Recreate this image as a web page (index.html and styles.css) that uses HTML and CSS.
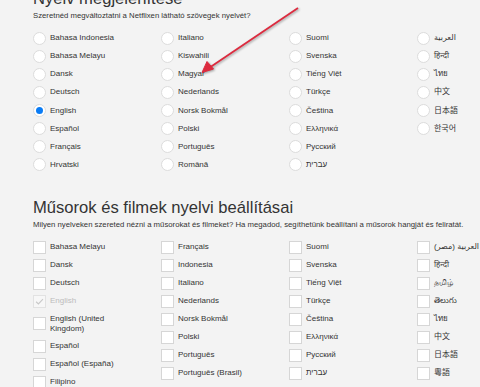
FILE: index.html
```html
<!DOCTYPE html>
<html lang="hu">
<head>
<meta charset="utf-8">
<title>Nyelv</title>
<link rel="stylesheet" href="styles.css">
</head>
<body>
<div class="page">
  <section class="sec">
    <h1 class="title">Nyelv megjelenítése</h1>
    <p class="sub">Szeretnéd megváltoztatni a Netflixen látható szövegek nyelvét?</p>
    <div class="radios">
      <div class="opt"><span class="radio"></span><span class="lbl">Bahasa Indonesia</span></div>
      <div class="opt"><span class="radio"></span><span class="lbl">Bahasa Melayu</span></div>
      <div class="opt"><span class="radio"></span><span class="lbl">Dansk</span></div>
      <div class="opt"><span class="radio"></span><span class="lbl">Deutsch</span></div>
      <div class="opt"><span class="radio on"></span><span class="lbl">English</span></div>
      <div class="opt"><span class="radio"></span><span class="lbl">Español</span></div>
      <div class="opt"><span class="radio"></span><span class="lbl">Français</span></div>
      <div class="opt"><span class="radio"></span><span class="lbl">Hrvatski</span></div>
      <div class="opt"><span class="radio"></span><span class="lbl">Italiano</span></div>
      <div class="opt"><span class="radio"></span><span class="lbl">Kiswahili</span></div>
      <div class="opt"><span class="radio"></span><span class="lbl">Magyar</span></div>
      <div class="opt"><span class="radio"></span><span class="lbl">Nederlands</span></div>
      <div class="opt"><span class="radio"></span><span class="lbl">Norsk Bokmål</span></div>
      <div class="opt"><span class="radio"></span><span class="lbl">Polski</span></div>
      <div class="opt"><span class="radio"></span><span class="lbl">Português</span></div>
      <div class="opt"><span class="radio"></span><span class="lbl">Română</span></div>
      <div class="opt"><span class="radio"></span><span class="lbl">Suomi</span></div>
      <div class="opt"><span class="radio"></span><span class="lbl">Svenska</span></div>
      <div class="opt"><span class="radio"></span><span class="lbl">Tiếng Việt</span></div>
      <div class="opt"><span class="radio"></span><span class="lbl">Türkçe</span></div>
      <div class="opt"><span class="radio"></span><span class="lbl">Čeština</span></div>
      <div class="opt"><span class="radio"></span><span class="lbl">Ελληνικά</span></div>
      <div class="opt"><span class="radio"></span><span class="lbl">Русский</span></div>
      <div class="opt"><span class="radio"></span><span class="lbl">עברית</span></div>
      <div class="opt"><span class="radio"></span><span class="lbl">العربية</span></div>
      <div class="opt"><span class="radio"></span><span class="lbl">हिन्दी</span></div>
      <div class="opt"><span class="radio"></span><span class="lbl">ไทย</span></div>
      <div class="opt"><span class="radio"></span><span class="lbl">中文</span></div>
      <div class="opt"><span class="radio"></span><span class="lbl">日本語</span></div>
      <div class="opt"><span class="radio"></span><span class="lbl">한국어</span></div>
    </div>
  </section>

  <section class="sec sec2">
    <h2 class="title">Műsorok és filmek nyelvi beállításai</h2>
    <p class="sub">Milyen nyelveken szereted nézni a műsorokat és filmeket? Ha megadod, segíthetünk beállítani a műsorok hangját és feliratát.</p>
    <div class="checks">
      <div class="col">
        <div class="copt"><span class="box"></span><span class="lbl">Bahasa Melayu</span></div>
        <div class="copt"><span class="box"></span><span class="lbl">Dansk</span></div>
        <div class="copt"><span class="box"></span><span class="lbl">Deutsch</span></div>
        <div class="copt dis"><span class="box"><svg class="tick" viewBox="0 0 13 13"><path d="M2.5 6.8 L5.2 9.4 L10.6 3.6" /></svg></span><span class="lbl">English</span></div>
        <div class="copt"><span class="box"></span><span class="lbl">English (United Kingdom)</span></div>
        <div class="copt"><span class="box"></span><span class="lbl">Español</span></div>
        <div class="copt"><span class="box"></span><span class="lbl">Español (España)</span></div>
        <div class="copt"><span class="box"></span><span class="lbl">Filipino</span></div>
      </div>
      <div class="col">
        <div class="copt"><span class="box"></span><span class="lbl">Français</span></div>
        <div class="copt"><span class="box"></span><span class="lbl">Indonesia</span></div>
        <div class="copt"><span class="box"></span><span class="lbl">Italiano</span></div>
        <div class="copt"><span class="box"></span><span class="lbl">Nederlands</span></div>
        <div class="copt"><span class="box"></span><span class="lbl">Norsk Bokmål</span></div>
        <div class="copt"><span class="box"></span><span class="lbl">Polski</span></div>
        <div class="copt"><span class="box"></span><span class="lbl">Português</span></div>
        <div class="copt"><span class="box"></span><span class="lbl">Português (Brasil)</span></div>
      </div>
      <div class="col">
        <div class="copt"><span class="box"></span><span class="lbl">Suomi</span></div>
        <div class="copt"><span class="box"></span><span class="lbl">Svenska</span></div>
        <div class="copt"><span class="box"></span><span class="lbl">Tiếng Việt</span></div>
        <div class="copt"><span class="box"></span><span class="lbl">Türkçe</span></div>
        <div class="copt"><span class="box"></span><span class="lbl">Čeština</span></div>
        <div class="copt"><span class="box"></span><span class="lbl">Ελληνικά</span></div>
        <div class="copt"><span class="box"></span><span class="lbl">Русский</span></div>
        <div class="copt"><span class="box"></span><span class="lbl">עברית</span></div>
      </div>
      <div class="col last">
        <div class="copt"><span class="box"></span><span class="lbl">العربية (مصر)</span></div>
        <div class="copt"><span class="box"></span><span class="lbl">हिन्दी</span></div>
        <div class="copt"><span class="box"></span><span class="lbl">தமிழ்</span></div>
        <div class="copt"><span class="box"></span><span class="lbl">తెలుగు</span></div>
        <div class="copt"><span class="box"></span><span class="lbl">ไทย</span></div>
        <div class="copt"><span class="box"></span><span class="lbl">中文</span></div>
        <div class="copt"><span class="box"></span><span class="lbl">日本語</span></div>
        <div class="copt"><span class="box"></span><span class="lbl">粵語</span></div>
      </div>
    </div>
  </section>

  <svg class="arrow" width="480" height="387" viewBox="0 0 480 387">
    <line x1="298" y1="8" x2="206" y2="70" />
    <polygon points="202,72.5 213.5,69 207,61.5" />
  </svg>
</div>
</body>
</html>
```
FILE: styles.css
```css
html, body {
  margin: 0;
  padding: 0;
  overflow: hidden;
  background: #f3f3f3;
}
body {
  font-family: "Liberation Sans", Arial, "DejaVu Sans", "Noto Sans", "Noto Sans CJK SC", sans-serif;
  color: #333;
}
.page {
  position: relative;
  display: flow-root;
  padding: 0 0 0 33px;
  width: 447px;
  height: 387px;
}
.sec {
  display: flex;
  flex-direction: column;
}
.sec:first-child {
  margin-top: -11px;
}
.sec2 {
  margin-top: 24px;
}
.title {
  margin: 0;
  font-size: 16.6px;
  font-weight: normal;
  line-height: 20px;
  color: #333;
  white-space: nowrap;
}
.sub {
  margin: 1px 0 7px;
  font-size: 7.75px;
  line-height: 12px;
  color: #333;
  white-space: nowrap;
}
.radios {
  display: grid;
  grid-template-columns: 128px 128px 128px 1fr;
  grid-template-rows: repeat(8, 18.14px);
  grid-auto-flow: column;
}
.opt, .copt {
  display: flex;
  align-items: center;
  gap: 4px;
  font-size: 8px;
}
.lbl {
  line-height: 10px;
  color: #333;
}
.radio {
  flex: none;
  width: 11px;
  height: 11px;
  border: 1px solid #dcdcdc;
  border-radius: 50%;
  background: #fff;
  display: flex;
  align-items: center;
  justify-content: center;
}
.radio.on::after {
  content: "";
  width: 7px;
  height: 7px;
  border-radius: 50%;
  background: #0a7cf5;
}
.checks {
  display: flex;
}
.col {
  width: 128px;
  display: flex;
  flex-direction: column;
}
.col.last {
  width: auto;
  flex: 1;
}
.copt {
  min-height: 18px;
}
.copt .lbl {
  max-width: 74px;
  padding: 3.5px 0;
}
.box {
  flex: none;
  width: 11px;
  height: 11px;
  border: 1px solid #d6d6d6;
  background: #fff;
  display: flex;
}
.tick {
  width: 11px;
  height: 11px;
}
.tick path {
  fill: none;
  stroke: #c8c8c8;
  stroke-width: 1.3;
}
.copt.dis .box {
  border-color: #e2e2e2;
  background: #f7f7f7;
}
.copt.dis .lbl {
  color: #bcbcbc;
}
.arrow {
  position: absolute;
  left: 0;
  top: 0;
  pointer-events: none;
  filter: drop-shadow(1px 1px 1px rgba(0,0,0,0.35));
}
.arrow line {
  stroke: #dc2a3e;
  stroke-width: 1.8;
}
.arrow polygon {
  fill: #dc2a3e;
  stroke: #dc2a3e;
  stroke-width: 1;
  stroke-linejoin: round;
}
```
